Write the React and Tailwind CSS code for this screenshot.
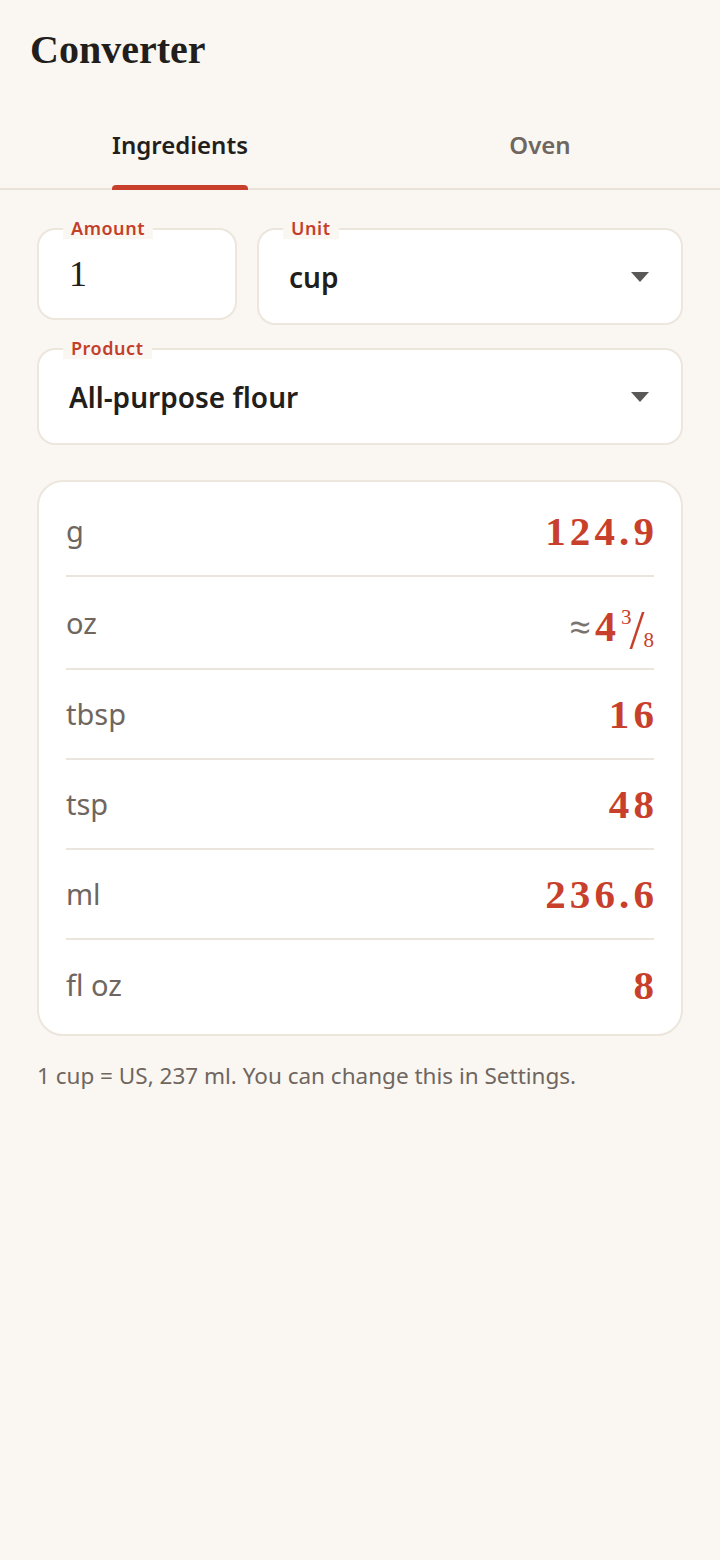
import { useState } from "react";

const sans = "font-['Noto_Sans','Open_Sans',sans-serif]";
const serif = "font-['Liberation_Serif','DejaVu_Serif',serif]";

const results = [
  { unit: "g", value: "124.9" },
  { unit: "oz", fraction: { whole: "4", num: "3", den: "8" } },
  { unit: "tbsp", value: "16" },
  { unit: "tsp", value: "48" },
  { unit: "ml", value: "236.6" },
  { unit: "fl oz", value: "8" },
];

function Caret() {
  return (
    <svg width="18" height="10" viewBox="0 0 18 10" className="shrink-0">
      <path d="M0 0 L18 0 L9 10 Z" fill="#5c5856" />
    </svg>
  );
}

function Field({ label, children, className = "" }) {
  return (
    <div
      className={`relative bg-white border-2 border-[#ece6dc] rounded-[18px] flex items-center pl-[30px] pr-[32px] ${className}`}
    >
      <span
        className={`absolute -top-[13px] left-[24px] px-[8px] bg-[#faf7f2] text-[18px] leading-[22px] font-semibold tracking-[0.03em] text-[#c43f2b] ${sans}`}
      >
        {label}
      </span>
      {children}
    </div>
  );
}

export default function App() {
  const [tab, setTab] = useState("ingredients");

  return (
    <div className={`min-h-[1560px] bg-[#faf7f2] text-[#221e1b] ${sans}`}>
      <h1 className={`pl-[30px] pt-[28px] text-[40px] leading-[44px] font-bold text-[#221e1b] ${serif}`}>
        Converter
      </h1>

      <div className="mt-[58px] flex border-b-2 border-[#e8e2d9]">
        {[
          ["ingredients", "Ingredients"],
          ["oven", "Oven"],
        ].map(([key, name]) => (
          <button
            key={key}
            onClick={() => setTab(key)}
            className="flex-1 flex justify-center"
          >
            <span
              className={`relative pb-[28px] text-[24px] leading-[30px] font-semibold ${
                tab === key ? "text-[#221e1b]" : "text-[#6f665f]"
              }`}
            >
              {name}
              {tab === key && (
                <span className="absolute left-0 right-0 -bottom-[2px] h-[5px] rounded-t-[4px] bg-[#c8402b]" />
              )}
            </span>
          </button>
        ))}
      </div>

      <div className="px-[37px] pt-[38px]">
        <div className="flex gap-[20px] items-start">
          <Field label="Amount" className="w-[200px] h-[92px]">
            <span className={`text-[36px] leading-none ${serif}`}>1</span>
          </Field>
          <Field label="Unit" className="flex-1 h-[97px] justify-between">
            <span className="text-[28px] font-semibold">cup</span>
            <Caret />
          </Field>
        </div>

        <Field label="Product" className="mt-[23px] h-[97px] justify-between">
          <span className="text-[28px] font-semibold">All-purpose flour</span>
          <Caret />
        </Field>

        <div className="mt-[35px] bg-white border-2 border-[#ece6dc] rounded-[26px] px-[27px] pt-[5px] pb-[4px]">
          {results.map((r, i) => (
            <div
              key={r.unit}
              className={`flex items-center justify-between ${
                r.fraction ? "h-[93px]" : "h-[90px]"
              } ${i < results.length - 1 ? "border-b-2 border-[#ebe6dd]" : ""}`}
            >
              <span className="text-[29px] text-[#6f665f]">{r.unit}</span>
              {r.fraction ? (
                <span className={`flex items-baseline leading-none text-[#c8402b] ${serif}`}>
                  <span className={`text-[38px] text-[#7a7470] mr-[4px] ${sans}`}>≈</span>
                  <span className="text-[42px] font-bold">{r.fraction.whole}</span>
                  <span className="relative -top-[17px] text-[21px] ml-[5px]">{r.fraction.num}</span>
                  <span className="relative top-[7px] text-[54px] -ml-[2px]">/</span>
                  <span className="relative top-[6px] text-[21px] -ml-[1px]">{r.fraction.den}</span>
                </span>
              ) : (
                <span className={`text-[41px] leading-none font-bold tracking-[0.1em] mr-[-4px] text-[#c8402b] ${serif}`}>
                  {r.value}
                </span>
              )}
            </div>
          ))}
        </div>

        <p className="mt-[25px] text-[22.5px] leading-[30px] text-[#6f665f]">
          1 cup = US, 237 ml. You can change this in Settings.
        </p>
      </div>
    </div>
  );
}
